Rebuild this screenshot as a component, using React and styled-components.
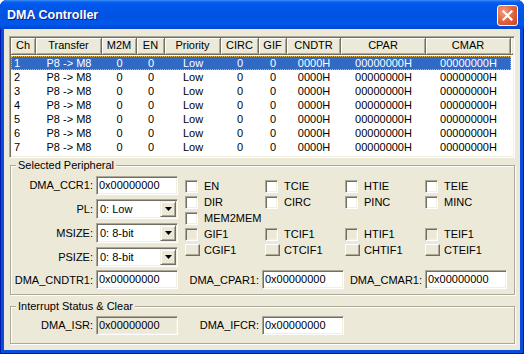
import React from "react";
import styled, { createGlobalStyle } from "styled-components";

const GlobalStyle = createGlobalStyle`
  html, body { margin: 0; padding: 0; background: #fff; }
  body { font-family: "Liberation Sans", Arial, sans-serif; font-size: 11px; color: #000; }
  * { box-sizing: border-box; }
`;

const columns = [
  { title: "Ch", w: 25, align: "left" },
  { title: "Transfer", w: 66 },
  { title: "M2M", w: 35 },
  { title: "EN", w: 28 },
  { title: "Priority", w: 56 },
  { title: "CIRC", w: 38 },
  { title: "GIF", w: 28 },
  { title: "CNDTR", w: 54 },
  { title: "CPAR", w: 85 },
  { title: "CMAR", w: 85 },
];

const rows = [1, 2, 3, 4, 5, 6, 7].map((n) => [
  String(n), "P8 -> M8", "0", "0", "Low", "0", "0", "0000H", "00000000H", "00000000H",
]);

const checks = [
  [{ t: "EN" }, { t: "TCIE" }, { t: "HTIE" }, { t: "TEIE" }],
  [{ t: "DIR" }, { t: "CIRC" }, { t: "PINC" }, { t: "MINC" }],
  [{ t: "MEM2MEM" }, null, null, null],
  [{ t: "GIF1", kind: "off" }, { t: "TCIF1", kind: "off" }, { t: "HTIF1", kind: "off" }, { t: "TEIF1", kind: "off" }],
  [{ t: "CGIF1", kind: "btn" }, { t: "CTCIF1", kind: "btn" }, { t: "CHTIF1", kind: "btn" }, { t: "CTEIF1", kind: "btn" }],
];

const Window = styled.div`
  width: 524px;
  height: 354px;
  display: flex;
  flex-direction: column;
  background: #0A4CDB;
  border-radius: 7px 7px 0 0;
  overflow: hidden;
  box-shadow: inset 1px 0 0 #0019A8, inset -1px 0 0 #0019A8, inset 0 -1px 0 #001A8C;
`;

const TitleBar = styled.div`
  height: 29px;
  flex-shrink: 0;
  display: flex;
  align-items: center;
  justify-content: space-between;
  padding: 0 6px 0 7px;
  background: linear-gradient(to bottom,
    #3D8FF5 0px, #0A63EE 2px, #0058EE 4px, #0055E8 10px,
    #0053E2 18px, #0058EC 24px, #0050E0 26px, #0045D0 29px);
`;

const Title = styled.span`
  font-family: "Liberation Sans", Arial, sans-serif;
  font-weight: bold;
  font-size: 12.5px;
  color: #fff;
  text-shadow: 1px 1px 0 #0A1E8C;
  padding-top: 1px;
`;

const CloseButton = styled.div`
  width: 21px;
  height: 21px;
  margin-top: 1px;
  border: 1px solid #fff;
  border-radius: 3px;
  background: radial-gradient(circle at 30% 30%, #F29E82 0%, #E06A45 45%, #C9431C 100%);
  display: flex;
  align-items: center;
  justify-content: center;
`;

const Client = styled.div`
  flex: 1;
  margin: 0 4px 4px;
  background: #ECE9D8;
  padding: 7px 5px 0;
  display: flex;
  flex-direction: column;
`;

const ListBox = styled.div`
  width: 506px;
  height: 122px;
  background: #fff;
  border: 1px solid;
  border-color: #ACA899 #fff #fff #ACA899;
  box-shadow: inset 1px 1px 0 #716F64, inset -1px -1px 0 #F1EFE2;
  padding: 1px;
  overflow: hidden;
`;

const HeaderRow = styled.div`
  display: flex;
  height: 17px;
  background: #ECE9D8;
  margin-bottom: 1px;
`;

const HeaderCell = styled.div`
  width: ${(p) => p.$w}px;
  flex-shrink: 0;
  text-align: center;
  line-height: 15px;
  border-right: 1px solid #716F64;
  border-bottom: 1px solid #716F64;
  box-shadow: inset 1px 1px 0 #fff, inset -1px -1px 0 #ACA899;
`;

const HeaderFill = styled.div`
  flex: 1;
  border-bottom: 1px solid #716F64;
  box-shadow: inset 1px 1px 0 #fff, inset 0 -1px 0 #ACA899;
`;

const Row = styled.div`
  display: flex;
  width: 500px;
  height: 14px;
  line-height: 14px;
  background: ${(p) => (p.$sel ? "#316AC5" : "transparent")};
  color: ${(p) => (p.$sel ? "#fff" : "#000")};
  outline: ${(p) => (p.$sel ? "1px dotted #E7B44A" : "none")};
  outline-offset: -1px;
`;

const Cell = styled.div`
  width: ${(p) => p.$w}px;
  flex-shrink: 0;
  text-align: ${(p) => p.$align || "center"};
  padding-left: ${(p) => (p.$align === "left" ? 3 : 0)}px;
  white-space: nowrap;
`;

const Group = styled.div`
  width: 505px;
  margin: ${(p) => p.$top}px 0 0 1px;
  padding-bottom: ${(p) => p.$bottom}px;
  border: 1px solid #ACA899;
  box-shadow: inset 1px 1px 0 #fff, 1px 1px 0 #fff;
  display: flex;
  flex-direction: column;
`;

const GroupTitle = styled.div`
  align-self: flex-start;
  margin: -7px 0 0 5px;
  padding: 0 2px;
  line-height: 13px;
  background: #ECE9D8;
`;

const Upper = styled.div`
  display: flex;
  margin-top: 1px;
`;

const FieldColumn = styled.div`
  display: flex;
  flex-direction: column;
`;

const FieldRow = styled.div`
  display: flex;
  align-items: center;
  height: ${(p) => p.$h || 24}px;
  margin-top: ${(p) => p.$mt || 0}px;
`;

const Label = styled.div`
  width: ${(p) => p.$w}px;
  text-align: right;
  padding-right: 3px;
  white-space: nowrap;
`;

const TextBox = styled.div`
  width: 82px;
  height: 19px;
  line-height: 17px;
  padding-left: 2px;
  background: ${(p) => (p.$readOnly ? "#ECE9D8" : "#fff")};
  border: 1px solid;
  border-color: #ACA899 #fff #fff #ACA899;
  box-shadow: inset 1px 1px 0 #716F64, inset -1px -1px 0 #F1EFE2;
`;

const Combo = styled.div`
  width: 82px;
  height: 20px;
  display: flex;
  align-items: center;
  justify-content: space-between;
  padding-left: 3px;
  background: #fff;
  border: 1px solid;
  border-color: #ACA899 #fff #fff #ACA899;
  box-shadow: inset 1px 1px 0 #716F64, inset -1px -1px 0 #F1EFE2;
`;

const DropButton = styled.div`
  width: 16px;
  height: 16px;
  margin-right: 1px;
  background: #ECE9D8;
  border: 1px solid;
  border-color: #F1EFE2 #716F64 #716F64 #F1EFE2;
  box-shadow: inset 1px 1px 0 #fff, inset -1px -1px 0 #ACA899;
  display: flex;
  align-items: center;
  justify-content: center;
`;

const CheckGrid = styled.div`
  display: grid;
  grid-template-columns: repeat(4, 80px);
  grid-auto-rows: 16px;
  margin: 5px 0 0 7px;
`;

const CheckItem = styled.div`
  display: flex;
  align-items: center;
  gap: ${(p) => (p.$btn ? 4 : 6)}px;
  white-space: nowrap;
`;

const CheckBox = styled.div`
  width: 13px;
  height: 13px;
  flex-shrink: 0;
  background: ${(p) => (p.$off ? "#ECE9D8" : "#fff")};
  border: 1px solid;
  border-color: #ACA899 #fff #fff #ACA899;
  box-shadow: inset 1px 1px 0 #716F64, inset -1px -1px 0 #F1EFE2;
`;

const MiniButton = styled.div`
  width: 15px;
  height: 12px;
  flex-shrink: 0;
  background: #ECE9D8;
  border: 1px solid;
  border-color: #fff #716F64 #716F64 #fff;
  box-shadow: inset -1px -1px 0 #ACA899;
`;

const BottomRow = styled.div`
  display: flex;
  align-items: center;
  height: 19px;
  margin-top: 1px;
`;

function Field({ label, w, value, readOnly }) {
  return (
    <>
      <Label $w={w}>{label}</Label>
      <TextBox $readOnly={readOnly}>{value}</TextBox>
    </>
  );
}

function ComboField({ label, value }) {
  return (
    <FieldRow>
      <Label $w={85}>{label}</Label>
      <Combo>
        <span>{value}</span>
        <DropButton>
          <svg width="7" height="4" viewBox="0 0 7 4">
            <path d="M0 0h7L3.5 4z" fill="#000" />
          </svg>
        </DropButton>
      </Combo>
    </FieldRow>
  );
}

export default function App() {
  return (
    <>
      <GlobalStyle />
      <Window>
        <TitleBar>
          <Title>DMA Controller</Title>
          <CloseButton>
            <svg width="11" height="11" viewBox="0 0 11 11">
              <path d="M1.5 1.5l8 8M9.5 1.5l-8 8" stroke="#fff" strokeWidth="2.2" strokeLinecap="square" />
            </svg>
          </CloseButton>
        </TitleBar>
        <Client>
          <ListBox>
            <HeaderRow>
              {columns.map((c) => (
                <HeaderCell key={c.title} $w={c.w}>{c.title}</HeaderCell>
              ))}
              <HeaderFill />
            </HeaderRow>
            {rows.map((r, ri) => (
              <Row key={ri} $sel={ri === 0}>
                {r.map((v, ci) => (
                  <Cell key={ci} $w={columns[ci].w} $align={columns[ci].align}>{v}</Cell>
                ))}
              </Row>
            ))}
          </ListBox>

          <Group $top={7} $bottom={5}>
            <GroupTitle>Selected Peripheral</GroupTitle>
            <Upper>
              <FieldColumn>
                <FieldRow>
                  <Field label="DMA_CCR1:" w={85} value="0x00000000" />
                </FieldRow>
                <ComboField label="PL:" value="0: Low" />
                <ComboField label="MSIZE:" value="0: 8-bit" />
                <ComboField label="PSIZE:" value="0: 8-bit" />
              </FieldColumn>
              <CheckGrid>
                {checks.flat().map((c, i) =>
                  c ? (
                    <CheckItem key={i} $btn={c.kind === "btn"}>
                      {c.kind === "btn" ? <MiniButton /> : <CheckBox $off={c.kind === "off"} />}
                      <span>{c.t}</span>
                    </CheckItem>
                  ) : (
                    <span key={i} />
                  )
                )}
              </CheckGrid>
            </Upper>
            <BottomRow>
              <Field label="DMA_CNDTR1:" w={85} value="0x00000000" />
              <Field label="DMA_CPAR1:" w={84} value="0x00000000" />
              <Field label="DMA_CMAR1:" w={81} value="0x00000000" />
            </BottomRow>
          </Group>

          <Group $top={11} $bottom={6}>
            <GroupTitle>Interrupt Status &amp; Clear</GroupTitle>
            <FieldRow>
              <Field label="DMA_ISR:" w={85} value="0x00000000" readOnly />
              <Field label="DMA_IFCR:" w={84} value="0x00000000" />
            </FieldRow>
          </Group>
        </Client>
      </Window>
    </>
  );
}
